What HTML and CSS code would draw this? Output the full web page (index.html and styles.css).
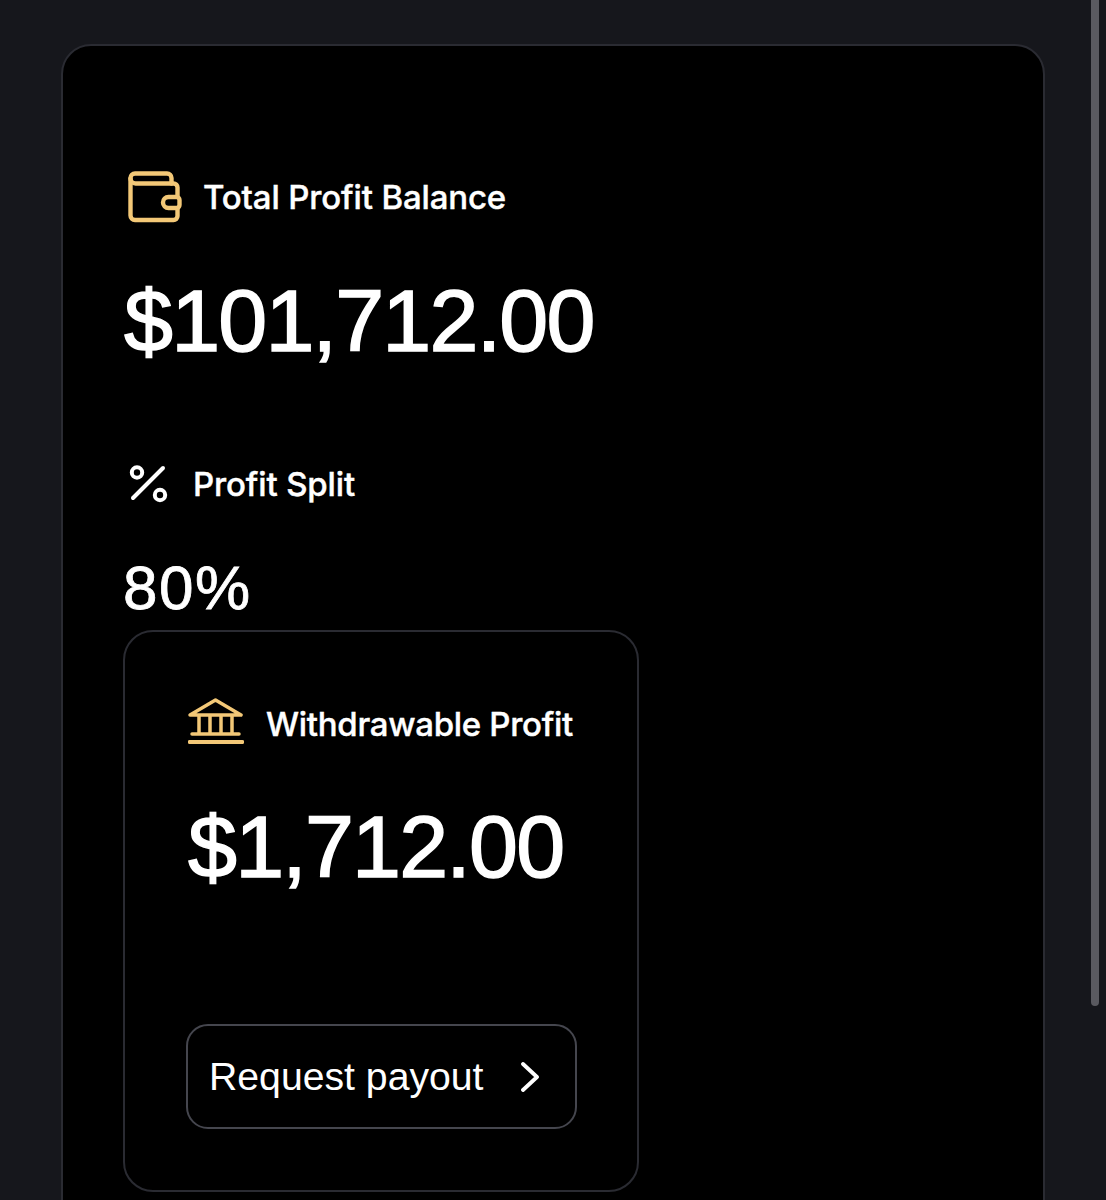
FILE: index.html
```html
<!DOCTYPE html>
<html lang="en">
<head>
  <meta charset="UTF-8">
  <meta name="viewport" content="width=device-width, initial-scale=1.0">
  <title>Profit Balance</title>
  <link rel="stylesheet" href="styles.css">
</head>
<body>
  <main class="card">
    <div class="label-row">
      <svg class="icon-wallet" viewBox="0 0 56 52" fill="none" stroke="#f3c877" stroke-width="4.400" stroke-linecap="round" stroke-linejoin="round">
        <path d="M43.500 12.500V7a4.500 4.500 0 0 0-4.500-4.500H7A4.500 4.500 0 0 0 2.500 7v37.500A4.500 4.500 0 0 0 7 49h38.500a4 4 0 0 0 4-4v-8"/>
        <path d="M2.500 7.500a5 5 0 0 0 5 5h38a4 4 0 0 1 4 4V26"/>
        <path d="M40.500 26h8a3 3 0 0 1 3 3v5a3 3 0 0 1-3 3h-8a5.500 5.500 0 0 1 0-11z"/>
      </svg>
      <span class="label">Total Profit Balance</span>
    </div>
    <div class="amount">$101,712.00</div>

    <div class="label-row split-row">
      <svg class="icon-percent" viewBox="0 0 40 40" fill="none" stroke="#fff" stroke-width="4" stroke-linecap="round">
        <circle cx="9" cy="8.500" r="5.200"/>
        <circle cx="32" cy="31" r="5.200"/>
        <path d="M5 34 35 4"/>
      </svg>
      <span class="label">Profit Split</span>
    </div>
    <div class="split-value">80%</div>

    <section class="withdraw">
      <div class="label-row">
        <svg class="icon-bank" viewBox="0 0 56 46" fill="none" stroke="#f3c877" stroke-width="3.500" stroke-linecap="round" stroke-linejoin="round">
          <path d="M2 17 27.500 2 53 17z"/>
          <path d="M11 18v17M22 18v17M33 18v17M44 18v17"/>
          <path d="M4 36h47"/>
          <path d="M1.500 44h53" stroke-width="3.800"/>
        </svg>
        <span class="label label-tight">Withdrawable Profit</span>
      </div>
      <div class="amount">$1,712.00</div>
      <button class="payout">
        <span>Request payout</span>
        <svg class="icon-chevron" viewBox="0 0 20 30" fill="none" stroke="#fff" stroke-width="3.800" stroke-linecap="round" stroke-linejoin="round">
          <path d="M2 2l14 13L2 28"/>
        </svg>
      </button>
    </section>
  </main>
  <div class="scrollbar"></div>
</body>
</html>
```

FILE: styles.css
```css
html, body {
  height: 1200px;
  overflow: hidden;
}
body {
  margin: 0;
  background-color: #16171c;
  color: #fff;
  font-family: "Liberation Sans", Arial, sans-serif;
}
.card {
  box-sizing: border-box;
  width: 984px;
  height: 1250px;
  margin: 44px 0 0 61px;
  padding: 125px 60px 0 61px;
  background: #000;
  border: 2px solid #2a2b32;
  border-radius: 30px;
}
.label-row {
  display: flex;
  align-items: center;
}
.label {
  font-family: Inter, "Liberation Sans", sans-serif;
  font-size: 33px;
  font-weight: 500;
  letter-spacing: -0.15px;
  line-height: 50px;
  -webkit-text-stroke: 0.4px #fff;
  white-space: nowrap;
}
.label-tight {
  letter-spacing: -0.3px;
}
.icon-wallet {
  width: 56px;
  height: 52px;
  margin: 0 19px 0 4px;
}
.icon-percent {
  width: 40px;
  height: 40px;
  margin: 0 25px 0 4px;
}
.icon-bank {
  width: 56px;
  height: 46px;
  margin: 0 22px 5px 0;
}
.amount {
  margin-top: 48px;
  font-size: 88px;
  line-height: 100px;
  letter-spacing: -1.800px;
  -webkit-text-stroke: 1.500px #fff;
  white-space: nowrap;
}
.split-row {
  margin-top: 88px;
}
.split-value {
  margin: 53px 0 -1px -1px;
  font-size: 62px;
  line-height: 52px;
  letter-spacing: 1.500px;
  -webkit-text-stroke: 0.8px #fff;
}
.withdraw {
  box-sizing: border-box;
  width: 516px;
  height: 562px;
  margin: 17px 0 0 -1px;
  padding: 66px 60px 0 63px;
  border: 2px solid #2a2b32;
  border-radius: 30px;
}
.payout {
  display: flex;
  align-items: center;
  justify-content: space-between;
  box-sizing: border-box;
  width: 391px;
  height: 105px;
  margin-top: 127px;
  margin-left: -2px;
  padding: 0 34px 0 21px;
  background: #000;
  border: 2px solid #45464e;
  border-radius: 22px;
  color: #fff;
  font-family: "Liberation Sans", Arial, sans-serif;
  font-size: 39.200px;
}
.icon-chevron {
  width: 20px;
  height: 30px;
}
.scrollbar {
  position: absolute;
  top: 0;
  left: 1091px;
  width: 8px;
  height: 1006px;
  background: #5a5a60;
  border-radius: 0 0 4px 4px;
}
```
